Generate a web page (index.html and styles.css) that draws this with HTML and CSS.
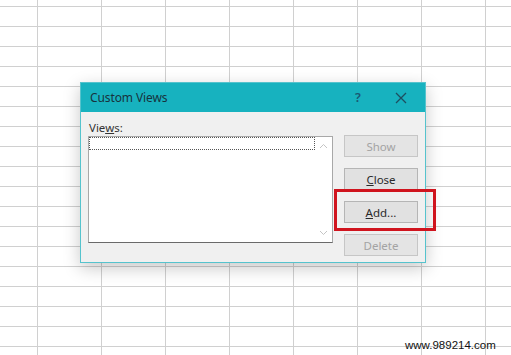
FILE: index.html
```html
<!DOCTYPE html>
<html>
<head>
<meta charset="utf-8">
<link rel="stylesheet" href="styles.css">
</head>
<body>
<div class="sheet"></div>

<div class="dialog">
  <div class="titlebar">
    <span class="title">Custom Views</span>
    <span class="help">?</span>
    <span class="close">
      <svg width="12" height="12" viewBox="0 0 12 12"><path d="M1 1 L11 11 M11 1 L1 11" stroke="#1d4f60" stroke-width="1.3" fill="none"/></svg>
    </span>
  </div>
  <div class="content">
    <div class="left">
      <div class="label">Vie<u>w</u>s:</div>
      <div class="listbox">
        <div class="items">
          <div class="focusrow"></div>
        </div>
        <div class="scrollbar">
          <svg width="9" height="6" viewBox="0 0 9 6"><polyline points="1,5 4.5,1.5 8,5" stroke="#c4c4c4" stroke-width="1" fill="none"/></svg>
          <svg width="9" height="6" viewBox="0 0 9 6"><polyline points="1,1 4.5,4.5 8,1" stroke="#c4c4c4" stroke-width="1" fill="none"/></svg>
        </div>
      </div>
    </div>
    <div class="buttons">
      <div class="btn disabled">Show</div>
      <div class="btn"><u>C</u>lose</div>
      <div class="btn"><u>A</u>dd...</div>
      <div class="btn disabled">Delete</div>
    </div>
  </div>
</div>

<div class="highlight"></div>
<div class="watermark">www.989214.com</div>
</body>
</html>
```

FILE: styles.css
```css
html, body {
  margin: 0;
  padding: 0;
  width: 511px;
  height: 355px;
  overflow: hidden;
  background: #ffffff;
  font-family: "Noto Sans", "Open Sans", sans-serif;
}

.sheet {
  width: 511px;
  height: 355px;
  background-color: #ffffff;
  background-image:
    linear-gradient(to right, #d0d0d0 1px, transparent 1px),
    linear-gradient(to bottom, #d0d0d0 1px, transparent 1px);
  background-size: 64px 100%, 100% 20px;
  background-position: 37px 0, 0 6px;
}

.dialog {
  position: absolute;
  left: 80px;
  top: 82px;
  width: 346px;
  box-sizing: border-box;
  border: 1px solid #55c3cd;
  background: #f0f0f0;
  box-shadow: 0 5px 16px rgba(0, 0, 0, 0.22);
  display: flex;
  flex-direction: column;
}

.titlebar {
  height: 29px;
  background: #17b2bf;
  display: flex;
  align-items: center;
  padding-left: 9px;
  color: #17323d;
}

.title {
  flex: 1;
  font-size: 12px;
  letter-spacing: -0.1px;
}

.help {
  width: 14px;
  text-align: center;
  font-size: 12.5px;
  font-weight: 600;
  color: #1a5772;
  margin-right: 30px;
}

.close {
  width: 12px;
  height: 12px;
  display: flex;
  margin-right: 18px;
}

.content {
  display: flex;
  gap: 11px;
  padding: 9px 7px 6px 7px;
}

.left {
  display: flex;
  flex-direction: column;
  width: 245px;
}

.label {
  height: 15px;
  line-height: 13px;
  font-size: 11.5px;
  color: #333333;
  padding-left: 1px;
}

.label u {
  text-decoration-thickness: 1px;
  text-underline-offset: 1px;
}

.listbox {
  height: 107px;
  box-sizing: border-box;
  border: 1px solid #a8a8a8;
  border-bottom-color: #6a6a6a;
  background: #ffffff;
  display: flex;
}

.items {
  flex: 1;
}

.focusrow {
  height: 13px;
  box-sizing: border-box;
  border: 1px dotted #555555;
}

.scrollbar {
  width: 17px;
  display: flex;
  flex-direction: column;
  justify-content: space-between;
  align-items: center;
  padding: 6px 0;
}

.buttons {
  display: flex;
  flex-direction: column;
  gap: 11px;
  margin-top: 14px;
}

.btn {
  width: 74px;
  height: 22px;
  box-sizing: border-box;
  border: 1px solid #b5b5b5;
  background: #e1e1e1;
  font-size: 11.5px;
  color: #2a2a2a;
  display: flex;
  align-items: center;
  justify-content: center;
}

.btn.disabled {
  color: #a3a3a3;
  border-color: #c6c6c6;
  background: #e4e4e4;
}

.highlight {
  position: absolute;
  left: 334px;
  top: 189px;
  width: 102px;
  height: 42px;
  box-sizing: border-box;
  border: 3px solid #d0141e;
}

.watermark {
  position: absolute;
  left: 405px;
  top: 339px;
  font-family: "Liberation Sans", Arial, sans-serif;
  font-size: 11.5px;
  color: #111111;
}
```
